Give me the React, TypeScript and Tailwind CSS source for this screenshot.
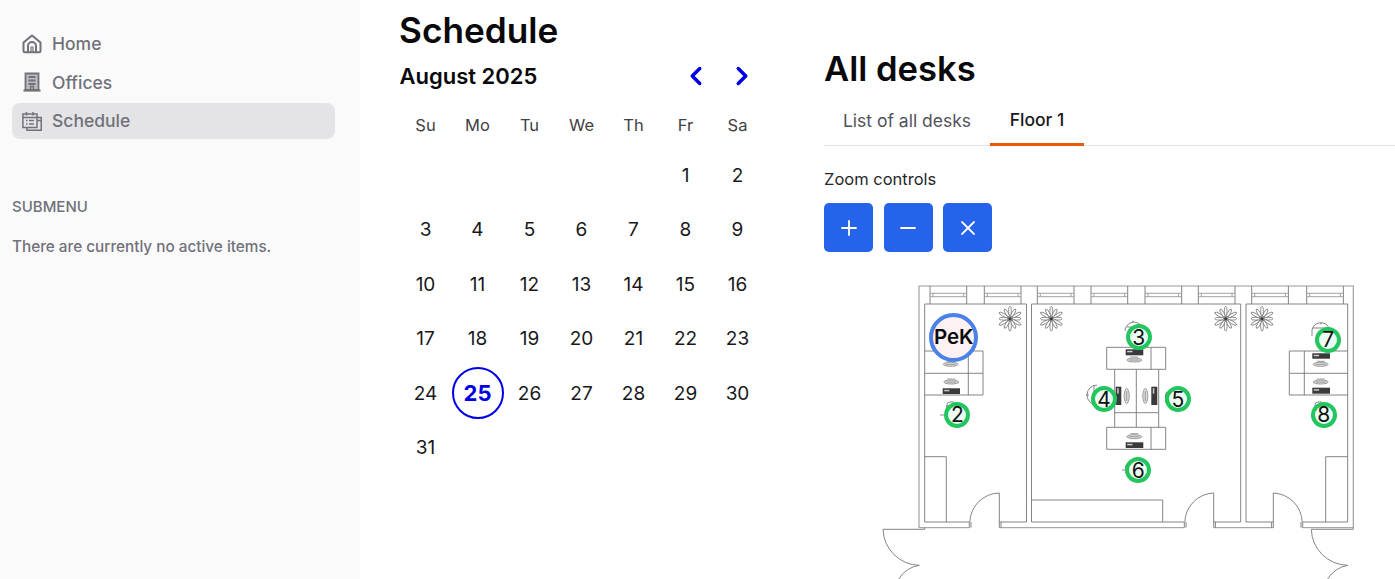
import { ChevronLeft, ChevronRight, Plus, Minus, X } from "lucide-react";

const font = "font-['Inter',sans-serif]";

function HomeIcon() {
  return (
    <svg width="20" height="20" viewBox="0 0 20 20" fill="none" stroke="#71717a" strokeWidth="2" strokeLinejoin="round" className="shrink-0">
      <path d="M1.500 8.500 10 1.500l8.500 7v8.200a1.500 1.500 0 0 1-1.500 1.500H3a1.500 1.500 0 0 1-1.500-1.500z" />
      <path d="M6 18v-6a4 4 0 0 1 8 0v6" />
      <path d="M9 18v-5h2v5" strokeWidth="1.200" />
    </svg>
  );
}

function OfficeIcon() {
  return (
    <svg width="18" height="20" viewBox="0 0 18 20" fill="none" stroke="#71717a" className="shrink-0">
      <path d="M2.500 1.500h13v16.500h-13z" strokeWidth="1.800" fill="#71717a" fillOpacity="0.45" />
      <path d="M0.500 18.500h17" strokeWidth="2.200" />
      <path d="M5.500 5h7M5.500 8.500h7M5.500 12h7" strokeWidth="1.800" />
      <path d="M7.500 18v-3.500h3V18" strokeWidth="1.500" />
    </svg>
  );
}

function ScheduleIcon() {
  return (
    <svg width="20" height="20" viewBox="0 0 20 20" fill="none" stroke="#71717a" strokeWidth="1.500" className="shrink-0">
      <path d="M15 16.500H0.900V3h14.100z" />
      <path d="M0.900 6.500h14.100M4.500 1v3.500M11 1v3.500" />
      <path d="M4 9.500h1.500M7 9.500h5M4 13h1.500M7 13h5" strokeWidth="1.700" />
      <path d="M15 6.500h4.200v12.800H5V16.500M15 9.500h4.200" />
    </svg>
  );
}

function NavItem({ icon, label, active }: { icon: React.ReactNode; label: string; active?: boolean }) {
  return (
    <div className={`flex h-9 items-center rounded-lg pl-[10px] ${active ? "bg-[#e4e4e7]" : ""}`}>
      <span className="flex w-5 justify-center">{icon}</span>
      <span className="ml-[10px] pt-px text-[17.500px] font-medium leading-none text-[#71717a]">{label}</span>
    </div>
  );
}

const weeks: (number | null)[][] = [
  [null, null, null, null, null, 1, 2],
  [3, 4, 5, 6, 7, 8, 9],
  [10, 11, 12, 13, 14, 15, 16],
  [17, 18, 19, 20, 21, 22, 23],
  [24, 25, 26, 27, 28, 29, 30],
  [31, null, null, null, null, null, null],
];

function Calendar() {
  return (
    <div className="ml-[0.500px] w-[364px]">
      <div className="grid grid-cols-7">
        {["Su", "Mo", "Tu", "We", "Th", "Fr", "Sa"].map((d) => (
          <div key={d} className="flex h-[35px] items-center justify-center text-[16.500px] text-[#3f3f46]">
            {d}
          </div>
        ))}
      </div>
      <div className="mt-[5.500px] grid grid-cols-7">
        {weeks.flat().map((d, i) => (
          <div key={i} className="flex h-[54.500px] items-center justify-center text-[19px] text-[#18181b]">
            {d === 25 ? (
              <span className="-mt-px flex h-[52px] w-[52px] items-center justify-center rounded-full border-[2.500px] border-[#0000e6] text-[22px] font-bold text-[#0000e6]">
                25
              </span>
            ) : (
              d
            )}
          </div>
        ))}
      </div>
    </div>
  );
}

function Plant({ x, y }: { x: number; y: number }) {
  const angles = [0, 30, 60, 90, 120, 150, 180, 210, 240, 270, 300, 330];
  return (
    <g transform={`translate(${x} ${y})`}>
      {angles.map((a) => (
        <ellipse key={a} cx="0" cy={a % 60 === 0 ? -7.500 : -6.500} rx="1.400" ry={a % 60 === 0 ? 5 : 4.500} transform={`rotate(${a})`} fill="#fff" stroke="#666" strokeWidth="0.700" />
      ))}
      <circle r="1.800" fill="#333" />
    </g>
  );
}

function HChair({ cx, cy }: { cx: number; cy: number }) {
  return (
    <g stroke="#888" strokeWidth="0.800" fill="#ddd">
      <ellipse cx={cx} cy={cy} rx="7.500" ry="2" />
      <path d={`M${cx - 5} ${cy}h10M${cx - 4} ${cy - 3}h8`} fill="none" />
    </g>
  );
}

function VChair({ cx, cy }: { cx: number; cy: number }) {
  return (
    <g stroke="#888" strokeWidth="0.800" fill="#ddd">
      <ellipse cx={cx} cy={cy} rx="2.500" ry="7.500" />
      <path d={`M${cx} ${cy - 5}v10`} fill="none" />
    </g>
  );
}

function Monitor({ x, y, w, h }: { x: number; y: number; w: number; h: number }) {
  const horizontal = w > h;
  return (
    <g>
      <rect x={x} y={y} width={w} height={h} fill="#3a3a3e" stroke="none" />
      {horizontal ? (
        <rect x={x + 1.500} y={y + 1.500} width={w * 0.3} height={1.500} fill="#ccc" stroke="none" />
      ) : (
        <rect x={x + 1.500} y={y + 1.500} width={1.500} height={h * 0.3} fill="#ccc" stroke="none" />
      )}
    </g>
  );
}

function FloorPlan() {
  const windows = [930, 984.3, 1037.3, 1091, 1145, 1198.3, 1251.7, 1306.7];
  return (
    <svg width="571" height="299" viewBox="824 280 571 299" fill="none" stroke="#777" strokeWidth="0.900" className="block">
      <path d="M919 527.700V286H1353.300V527.700" stroke="#999" strokeWidth="1.100" />
      <path d="M919 527.700H969.300M999.300 527.700H1184.300M1213.700 527.700H1273.300M1302.700 527.700H1353.300" stroke="#888" />
      <path d="M969.300 522H924.700V304H1026.500V522H999.300" />
      <path d="M1184.300 522H1031.500V304H1240.700V522H1213.700" />
      <path d="M1273.300 522H1246V304H1347.700V522H1302.700" />
      {windows.map((x) => (
        <g key={x}>
          <path d={`M${x} 304V286M${x + 36.700} 304V286`} />
          <path d={`M${x} 293.300H${x + 36.700}M${x} 296.700H${x + 36.700}`} stroke="#999" />
          <path d={`M${x + 3} 293.300v3.400M${x + 33.700} 293.300v3.400`} stroke="#999" />
        </g>
      ))}
      <path d="M969.300 522v5.700M971 522v5.700M999.300 493V527.700M1001 522v5.700M999.300 493A30 30 0 0 0 969.800 522" />
      <path d="M1184.300 522v5.700M1186 522v5.700M1213.700 493V527.700M1215.400 522v5.700M1213.700 493A30 30 0 0 0 1184.800 522" />
      <path d="M1273.300 493V527.700M1271.600 522v5.700M1302.700 522v5.700M1301 522v5.700M1273.300 493A30 30 0 0 1 1302.200 522" />
      <path d="M883 529.300H924.700V527.700M883 529.300A37 37 0 0 0 919.300 565.300A30 30 0 0 0 898.700 579" />
      <path d="M1311.300 529.300H1353.300V527.700M1311.300 529.300A37 37 0 0 0 1347.700 565.300A30 30 0 0 0 1327.700 579" />
      <path d="M924.700 456.700H946.300V522M1325.700 522V456.700H1347.700M1031.500 500H1162.700V522" />
      <path d="M924.700 351H983V395H924.700M924.700 373.300H983M968.300 351V395" />
      <path d="M1347.700 351H1289.300V395H1347.700M1347.700 373.300H1289.300M1304.300 351V395" />
      <path d="M1106.700 347.300H1165.700V369.300H1106.700ZM1151 347.300V369.300" />
      <path d="M1106.700 427.300H1165.700V449.300H1106.700ZM1151 427.300V449.300" />
      <path d="M1114.700 369.300V427.300M1158.700 369.300V427.300M1136.300 369.300V427.300M1114.700 412.700H1158.700" />
      <Plant x={1010} y={318.700} />
      <Plant x={1051.300} y={318.700} />
      <Plant x={1225.700} y={318.700} />
      <Plant x={1262} y={318.700} />
      <Monitor x={1125.700} y={349.300} w={17.600} h={6} />
      <HChair cx={1134.300} cy={360} />
      <Monitor x={1125.700} y={442.300} w={17.600} h={5.700} />
      <HChair cx={1134.300} cy={436.700} />
      <Monitor x={1115.700} y={386.700} w={5.600} h={18.300} />
      <VChair cx={1126.700} cy={396} />
      <Monitor x={1151.300} y={386.700} w={6} h={18.300} />
      <VChair cx={1145.300} cy={396} />
      <Monitor x={942.700} y={388.300} w={17.300} h={5.700} />
      <HChair cx={951.300} cy={382} />
      <HChair cx={950.700} cy={364.300} />
      <Monitor x={1312.300} y={353.300} w={17.700} h={5.400} />
      <HChair cx={1320.700} cy={364.300} />
      <Monitor x={1312.300} y={387.700} w={17.700} h={6} />
      <HChair cx={1320.700} cy={382} />
      <path d="M1125 331a9 9 0 0 1 17-4h-15M1133 320.500v2" />
      <path d="M1097 385a10 10 0 0 0 0 20M1094 385v20M1086 395h3" />
      <path d="M1172 392h-4a2.500 2.500 0 0 0-2.500 2.500v8M1177 386v3" />
      <path d="M1131 463a5 5 0 0 0-5 2v8M1122 470h3" />
      <path d="M1312 336v-6a9 9 0 0 1 17-2h-16M1321 322.500v2" />
      <path d="M1322 402h-4a3 3 0 0 0-3 3v8M1311 415h4" />
      <path d="M954 402h-4a3 3 0 0 0-3 3v8M940 415h4M947 405v8" />
    </svg>
  );
}

function Marker({ pos, label }: { pos: string; label: string }) {
  return (
    <div className={`absolute flex h-[26px] w-[26px] items-center justify-center rounded-full border-[4px] border-[#22c55e] bg-[#ecfdf3] text-[21px] leading-none text-[#111] ${pos}`}>
      {label}
    </div>
  );
}

export default function App() {
  return (
    <div className={`flex h-[579px] w-[1395px] overflow-hidden bg-white ${font}`}>
      <aside className="w-[360px] shrink-0 bg-[#fafafa] pl-3 pr-[25px] pt-[25.500px]">
        <nav className="flex flex-col gap-[2.500px]">
          <NavItem icon={<HomeIcon />} label="Home" />
          <NavItem icon={<OfficeIcon />} label="Offices" />
          <NavItem icon={<ScheduleIcon />} label="Schedule" active />
        </nav>
        <h2 className="mt-[59.500px] text-[15px] font-medium leading-[18px] text-[#71717a]">SUBMENU</h2>
        <p className="mt-[22px] text-[15.300px] font-medium leading-[18px] text-[#71717a]">There are currently no active items.</p>
      </aside>

      <section className="w-[364px] shrink-0 ml-[39px]">
        <h1 className="mt-[8px] text-[35.200px] font-semibold leading-[44px] text-[#09090b]">Schedule</h1>
        <div className="mt-[4px] flex h-[40px] items-center justify-between">
          <span className="ml-[0.500px] text-[22px] font-semibold leading-none text-[#09090b]">August 2025</span>
          <div className="mr-[6.500px] flex gap-[16px]">
            <ChevronLeft size={30} strokeWidth={2.800} className="text-[#0000e6]" />
            <ChevronRight size={30} strokeWidth={2.800} className="text-[#0000e6]" />
          </div>
        </div>
        <div className="mt-[12px]">
          <Calendar />
        </div>
      </section>

      <section className="ml-[61px] min-w-0 flex-1">
        <h1 className="mt-[46px] text-[34.600px] font-semibold leading-[44px] text-[#09090b]">All desks</h1>
        <div className="mt-[13px] flex h-[43px] border-b border-[#e4e4e7]">
          <div className="flex w-[166px] items-center justify-center pb-[6px] text-[17.500px] font-normal text-[#52525b]">List of all desks</div>
          <div className="-mb-px flex w-[94px] items-center justify-center border-b-[3px] border-[#ea580c] pb-[5px] text-[17.500px] font-medium text-[#18181b]">Floor 1</div>
        </div>
        <p className="mt-[23px] text-[16.500px] font-normal leading-[20px] text-[#27272a]">Zoom controls</p>
        <div className="mt-[14px] flex gap-[10.500px]">
          <button className="flex h-[49px] w-[49px] items-center justify-center rounded-[5px] bg-[#2563eb] text-white"><Plus size={24} strokeWidth={1.800} /></button>
          <button className="flex h-[49px] w-[49px] items-center justify-center rounded-[5px] bg-[#2563eb] text-white"><Minus size={24} strokeWidth={1.800} /></button>
          <button className="flex h-[49px] w-[49px] items-center justify-center rounded-[5px] bg-[#2563eb] text-white"><X size={24} strokeWidth={1.800} /></button>
        </div>
        <div className="relative mt-[28px] h-[299px]">
          <FloorPlan />
          <div className="absolute left-[105.200px] top-[32.500px] flex h-[49px] w-[49px] items-center justify-center rounded-full border-[4.500px] border-[#4b82ea] bg-[#fdf1f1] text-[20.500px] font-semibold leading-none text-[#09090b]">PeK</div>
          <Marker pos="left-[120.300px] top-[121.700px]" label="2" />
          <Marker pos="left-[301.700px] top-[44.300px]" label="3" />
          <Marker pos="left-[267px] top-[106.300px]" label="4" />
          <Marker pos="left-[341px] top-[106.300px]" label="5" />
          <Marker pos="left-[301.300px] top-[177px]" label="6" />
          <Marker pos="left-[491.300px] top-[46.700px]" label="7" />
          <Marker pos="left-[486.700px] top-[121.700px]" label="8" />
        </div>
      </section>
    </div>
  );
}
